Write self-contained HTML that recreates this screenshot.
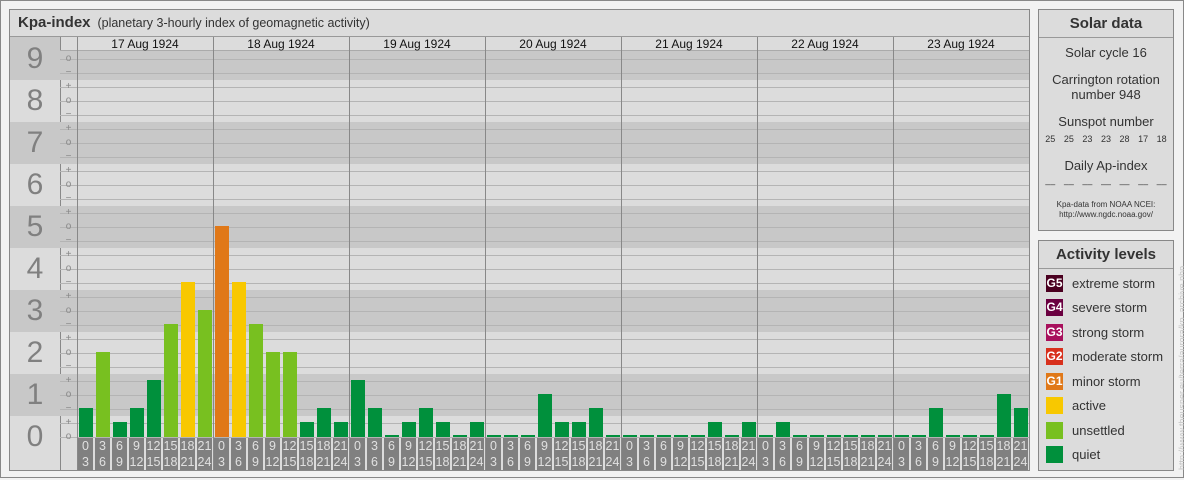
<!DOCTYPE html>
<html><head><meta charset="utf-8"><style>
*{margin:0;padding:0;box-sizing:border-box}
body{width:1184px;height:480px;background:#f2f2f2;font-family:"Liberation Sans",Arial,sans-serif;position:relative;overflow:hidden}
.a{position:absolute}
#outer{left:0;top:0;width:1184px;height:478px;border:1px solid #888}
#main{left:9px;top:9px;width:1021px;height:462px;border:1px solid #888;background:#dcdcdc}
.bd{position:absolute;left:60px;width:969px}
.nb{position:absolute;left:10px;width:50px;color:#808080;font-size:30px;text-align:center}
.gl{position:absolute;left:60px;width:969px;height:1px;background:#b4b4b4}
.tk{position:absolute;left:60px;width:17px;text-align:center;font-size:10px;color:#888;line-height:10px}
.vs{position:absolute;width:1px;background:#888;top:37px;height:433px}
.day{position:absolute;top:51px;height:386px;width:136px;display:flex;align-items:flex-end;padding-left:2px;gap:3px}
.day div{width:14px}
.q{background:#00903c}.u{background:#78c020}.y{background:#f8c800}.o{background:#e07818}
.lab{position:absolute;top:438px;height:32px;width:136px;display:flex;padding-left:1px;gap:2px}
.lab div{width:15px;height:32px;background:#808080;color:#e0e0e0;font-size:12.5px;line-height:16px;text-align:center;white-space:pre}
.dt{position:absolute;top:38px;width:136px;text-align:center;font-size:12px;color:#111;line-height:13px}
.box{position:absolute;left:1038px;width:136px;border:1px solid #888;background:#dcdcdc}
.bh{height:28px;border-bottom:1px solid #999;text-align:center;font-weight:bold;font-size:15px;color:#333;line-height:28px}
.c{text-align:center;color:#333;font-size:13px}
.lg{position:absolute;left:1046px;width:17px;height:17px;color:#fff;font-size:12px;font-weight:bold;line-height:17px;text-align:center}
.lt{position:absolute;left:1072px;font-size:13px;color:#333;line-height:17px}
</style></head><body>
<div class="a" id="outer"></div>
<div class="a" id="main"></div>
<div class="a" style="left:10px;top:10px;width:1019px;height:27px;border-bottom:1px solid #999;line-height:26px;padding-left:8px;font-size:12.5px;color:#333"><b style="font-size:15px">Kpa-index</b>&nbsp; (planetary 3-hourly index of geomagnetic activity)</div>

<div class="nb" style="top:37px;height:43px;background:#c8c8c8;line-height:43px">9</div>
<div class="nb" style="top:80px;height:42px;line-height:42px">8</div>
<div class="nb" style="top:122px;height:42px;background:#c8c8c8;line-height:42px">7</div>
<div class="nb" style="top:164px;height:42px;line-height:42px">6</div>
<div class="nb" style="top:206px;height:42px;background:#c8c8c8;line-height:42px">5</div>
<div class="nb" style="top:248px;height:42px;line-height:42px">4</div>
<div class="nb" style="top:290px;height:42px;background:#c8c8c8;line-height:42px">3</div>
<div class="nb" style="top:332px;height:42px;line-height:42px">2</div>
<div class="nb" style="top:374px;height:42px;background:#c8c8c8;line-height:42px">1</div>
<div class="nb" style="top:416px;height:54px;line-height:42px">0</div>
<div class="a" style="left:60px;top:37px;width:1px;height:433px;background:#888"></div>

<div class="bd" style="top:51px;height:29px;background:#c8c8c8"></div>
<div class="bd" style="top:122px;height:42px;background:#c8c8c8"></div>
<div class="bd" style="top:206px;height:42px;background:#c8c8c8"></div>
<div class="bd" style="top:290px;height:42px;background:#c8c8c8"></div>
<div class="bd" style="top:374px;height:42px;background:#c8c8c8"></div>
<div class="a" style="left:61px;top:37px;width:16px;height:14px;background:#dcdcdc"></div>
<div class="a" style="left:60px;top:50px;width:969px;height:1px;background:#aaa"></div>

<div class="gl" style="top:59px"></div><div class="gl" style="top:73px"></div><div class="gl" style="top:87px"></div><div class="gl" style="top:101px"></div><div class="gl" style="top:115px"></div><div class="gl" style="top:129px"></div><div class="gl" style="top:143px"></div><div class="gl" style="top:157px"></div><div class="gl" style="top:171px"></div><div class="gl" style="top:185px"></div><div class="gl" style="top:199px"></div><div class="gl" style="top:213px"></div><div class="gl" style="top:227px"></div><div class="gl" style="top:241px"></div><div class="gl" style="top:255px"></div><div class="gl" style="top:269px"></div><div class="gl" style="top:283px"></div><div class="gl" style="top:297px"></div><div class="gl" style="top:311px"></div><div class="gl" style="top:325px"></div><div class="gl" style="top:339px"></div><div class="gl" style="top:353px"></div><div class="gl" style="top:367px"></div><div class="gl" style="top:381px"></div><div class="gl" style="top:395px"></div><div class="gl" style="top:409px"></div><div class="gl" style="top:423px"></div><div class="gl" style="top:437px"></div>

<div class="tk" style="top:54px">o</div><div class="tk" style="top:68px">−</div>
<div class="tk" style="top:82px">+</div><div class="tk" style="top:96px">o</div><div class="tk" style="top:110px">−</div>
<div class="tk" style="top:124px">+</div><div class="tk" style="top:138px">o</div><div class="tk" style="top:152px">−</div>
<div class="tk" style="top:166px">+</div><div class="tk" style="top:180px">o</div><div class="tk" style="top:194px">−</div>
<div class="tk" style="top:208px">+</div><div class="tk" style="top:222px">o</div><div class="tk" style="top:236px">−</div>
<div class="tk" style="top:250px">+</div><div class="tk" style="top:264px">o</div><div class="tk" style="top:278px">−</div>
<div class="tk" style="top:292px">+</div><div class="tk" style="top:306px">o</div><div class="tk" style="top:320px">−</div>
<div class="tk" style="top:334px">+</div><div class="tk" style="top:348px">o</div><div class="tk" style="top:362px">−</div>
<div class="tk" style="top:376px">+</div><div class="tk" style="top:390px">o</div><div class="tk" style="top:404px">−</div>
<div class="tk" style="top:418px">+</div><div class="tk" style="top:432px">o</div>
<div class="a" style="left:77px;top:37px;width:1px;height:433px;background:#888"></div>

<div class="dt" style="left:77px">17 Aug 1924</div>
<div class="dt" style="left:213px">18 Aug 1924</div>
<div class="dt" style="left:349px">19 Aug 1924</div>
<div class="dt" style="left:485px">20 Aug 1924</div>
<div class="dt" style="left:621px">21 Aug 1924</div>
<div class="dt" style="left:757px">22 Aug 1924</div>
<div class="dt" style="left:893px">23 Aug 1924</div>

<div class="day" style="left:77px"><div class="q" style="height:29px"></div><div class="u" style="height:85px"></div><div class="q" style="height:15px"></div><div class="q" style="height:29px"></div><div class="q" style="height:57px"></div><div class="u" style="height:113px"></div><div class="y" style="height:155px"></div><div class="u" style="height:127px"></div></div>
<div class="day" style="left:213px"><div class="o" style="height:211px"></div><div class="y" style="height:155px"></div><div class="u" style="height:113px"></div><div class="u" style="height:85px"></div><div class="u" style="height:85px"></div><div class="q" style="height:15px"></div><div class="q" style="height:29px"></div><div class="q" style="height:15px"></div></div>
<div class="day" style="left:349px"><div class="q" style="height:57px"></div><div class="q" style="height:29px"></div><div class="q" style="height:2px"></div><div class="q" style="height:15px"></div><div class="q" style="height:29px"></div><div class="q" style="height:15px"></div><div class="q" style="height:2px"></div><div class="q" style="height:15px"></div></div>
<div class="day" style="left:485px"><div class="q" style="height:2px"></div><div class="q" style="height:2px"></div><div class="q" style="height:2px"></div><div class="q" style="height:43px"></div><div class="q" style="height:15px"></div><div class="q" style="height:15px"></div><div class="q" style="height:29px"></div><div class="q" style="height:2px"></div></div>
<div class="day" style="left:621px"><div class="q" style="height:2px"></div><div class="q" style="height:2px"></div><div class="q" style="height:2px"></div><div class="q" style="height:2px"></div><div class="q" style="height:2px"></div><div class="q" style="height:15px"></div><div class="q" style="height:2px"></div><div class="q" style="height:15px"></div></div>
<div class="day" style="left:757px"><div class="q" style="height:2px"></div><div class="q" style="height:15px"></div><div class="q" style="height:2px"></div><div class="q" style="height:2px"></div><div class="q" style="height:2px"></div><div class="q" style="height:2px"></div><div class="q" style="height:2px"></div><div class="q" style="height:2px"></div></div>
<div class="day" style="left:893px"><div class="q" style="height:2px"></div><div class="q" style="height:2px"></div><div class="q" style="height:29px"></div><div class="q" style="height:2px"></div><div class="q" style="height:2px"></div><div class="q" style="height:2px"></div><div class="q" style="height:43px"></div><div class="q" style="height:29px"></div></div>

<div class="lab" style="left:77px"><div>0
3</div><div>3
6</div><div>6
9</div><div>9
12</div><div>12
15</div><div>15
18</div><div>18
21</div><div>21
24</div></div>
<div class="lab" style="left:213px"><div>0
3</div><div>3
6</div><div>6
9</div><div>9
12</div><div>12
15</div><div>15
18</div><div>18
21</div><div>21
24</div></div>
<div class="lab" style="left:349px"><div>0
3</div><div>3
6</div><div>6
9</div><div>9
12</div><div>12
15</div><div>15
18</div><div>18
21</div><div>21
24</div></div>
<div class="lab" style="left:485px"><div>0
3</div><div>3
6</div><div>6
9</div><div>9
12</div><div>12
15</div><div>15
18</div><div>18
21</div><div>21
24</div></div>
<div class="lab" style="left:621px"><div>0
3</div><div>3
6</div><div>6
9</div><div>9
12</div><div>12
15</div><div>15
18</div><div>18
21</div><div>21
24</div></div>
<div class="lab" style="left:757px"><div>0
3</div><div>3
6</div><div>6
9</div><div>9
12</div><div>12
15</div><div>15
18</div><div>18
21</div><div>21
24</div></div>
<div class="lab" style="left:893px"><div>0
3</div><div>3
6</div><div>6
9</div><div>9
12</div><div>12
15</div><div>15
18</div><div>18
21</div><div>21
24</div></div>

<div class="vs" style="left:213px"></div><div class="vs" style="left:349px"></div><div class="vs" style="left:485px"></div><div class="vs" style="left:621px"></div><div class="vs" style="left:757px"></div><div class="vs" style="left:893px"></div>

<div class="box" style="top:9px;height:222px">
<div class="bh">Solar data</div>
<div class="c" style="margin-top:7px">Solar cycle 16</div>
<div class="c" style="margin-top:12px;line-height:15px">Carrington rotation<br>number 948</div>
<div class="c" style="margin-top:12px">Sunspot number</div>
<div style="display:flex;justify-content:space-around;font-size:9px;color:#333;margin-top:5px;padding:0 2px"><span>25</span><span>25</span><span>23</span><span>23</span><span>28</span><span>17</span><span>18</span></div>
<div class="c" style="margin-top:14px">Daily Ap-index</div>
<div style="display:flex;justify-content:space-around;font-size:9px;color:#333;margin-top:6px;padding:0 2px"><span>––</span><span>––</span><span>––</span><span>––</span><span>––</span><span>––</span><span>––</span></div>
<div style="text-align:center;font-size:8px;color:#333;margin-top:11px;line-height:10px">Kpa-data from NOAA NCEI:<br>http://www.ngdc.noaa.gov/</div>
</div>

<div class="box" style="top:240px;height:231px"><div class="bh">Activity levels</div></div>
<div class="lg" style="top:275px;background:#4a0020">G5</div><div class="lt" style="top:275px">extreme storm</div>
<div class="lg" style="top:299px;background:#6a0040">G4</div><div class="lt" style="top:299px">severe storm</div>
<div class="lg" style="top:324px;background:#a8105c">G3</div><div class="lt" style="top:324px">strong storm</div>
<div class="lg" style="top:348px;background:#d8301c">G2</div><div class="lt" style="top:348px">moderate storm</div>
<div class="lg" style="top:373px;background:#e07818">G1</div><div class="lt" style="top:373px">minor storm</div>
<div class="lg" style="top:397px;background:#f8c800"></div><div class="lt" style="top:397px">active</div>
<div class="lg" style="top:422px;background:#78c020"></div><div class="lt" style="top:422px">unsettled</div>
<div class="lg" style="top:446px;background:#00903c"></div><div class="lt" style="top:446px">quiet</div>

<div class="a" style="left:1178px;top:470px;transform:rotate(-90deg);transform-origin:0 0;white-space:nowrap;font-size:9px;color:#c4c4c4;line-height:9px">http://www.theusner.eu/terra/aurora/kp_archive.php</div>
</body></html>
